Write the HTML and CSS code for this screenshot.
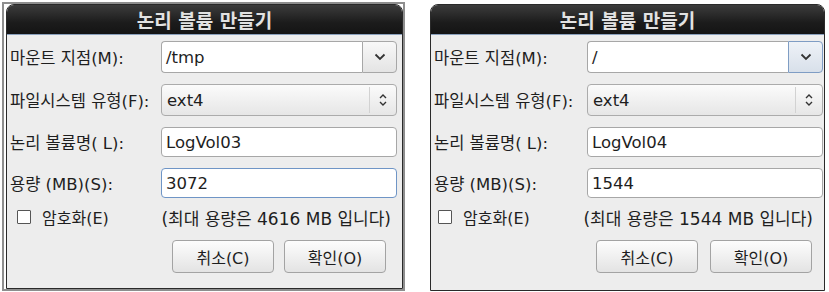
FILE: index.html
```html
<!DOCTYPE html>
<html lang="ko">
<head>
<meta charset="utf-8">
<link rel="stylesheet" href="styles.css">
</head>
<body>
<div class="page">
  <div class="shot shot-left">
    <div class="win">
      <div class="titlebar">논리 볼륨 만들기</div>
      <div class="content content-left">
        <div class="form">
          <label class="lbl">마운트 지점(M):</label>
          <div class="combo-entry">
            <div class="ce-text">/tmp</div>
            <div class="ce-btn"><svg width="12" height="8" viewBox="0 0 12 8"><path d="M1.5 1.5 L6 6 L10.5 1.5" fill="none" stroke="#333" stroke-width="1.8"/></svg></div>
          </div>
          <label class="lbl">파일시스템 유형(F):</label>
          <div class="combo-btn">
            <div class="cb-text">ext4</div>
            <div class="cb-sep"></div>
            <div class="cb-arrows"><svg width="10" height="14" viewBox="0 0 10 14"><path d="M2 5 L5 2 L8 5 M2 9 L5 12 L8 9" fill="none" stroke="#333" stroke-width="1.4"/></svg></div>
          </div>
          <label class="lbl">논리 볼륨명( L):</label>
          <div class="entry">LogVol03</div>
          <label class="lbl">용량 (MB)(S):</label>
          <div class="entry focused">3072</div>
        </div>
        <div class="checkrow">
          <div class="check"><span class="box"></span><span>암호화(E)</span></div>
          <div class="maxinfo">(최대 용량은 4616 MB 입니다)</div>
        </div>
        <div class="buttons">
          <button class="btn">취소(C)</button>
          <button class="btn">확인(O)</button>
        </div>
      </div>
    </div>
  </div>

  <div class="shot shot-right">
    <div class="win">
      <div class="titlebar">논리 볼륨 만들기</div>
      <div class="content content-right">
        <div class="form">
          <label class="lbl">마운트 지점(M):</label>
          <div class="combo-entry">
            <div class="ce-text">/</div>
            <div class="ce-btn ce-btn-focus"><svg width="12" height="8" viewBox="0 0 12 8"><path d="M1.5 1.5 L6 6 L10.5 1.5" fill="none" stroke="#333" stroke-width="1.8"/></svg></div>
          </div>
          <label class="lbl">파일시스템 유형(F):</label>
          <div class="combo-btn">
            <div class="cb-text">ext4</div>
            <div class="cb-sep"></div>
            <div class="cb-arrows"><svg width="10" height="14" viewBox="0 0 10 14"><path d="M2 5 L5 2 L8 5 M2 9 L5 12 L8 9" fill="none" stroke="#333" stroke-width="1.4"/></svg></div>
          </div>
          <label class="lbl">논리 볼륨명( L):</label>
          <div class="entry">LogVol04</div>
          <label class="lbl">용량 (MB)(S):</label>
          <div class="entry">1544</div>
        </div>
        <div class="checkrow">
          <div class="check"><span class="box"></span><span>암호화(E)</span></div>
          <div class="maxinfo">(최대 용량은 1544 MB 입니다)</div>
        </div>
        <div class="buttons">
          <button class="btn">취소(C)</button>
          <button class="btn">확인(O)</button>
        </div>
      </div>
    </div>
  </div>
</div>
</body>
</html>
```

FILE: styles.css
```css
html, body {
  margin: 0;
  padding: 0;
  background: #ffffff;
}
body {
  width: 829px;
  height: 292px;
  overflow: hidden;
  font-family: "DejaVu Sans", "Noto Sans CJK KR", sans-serif;
  font-size: 16px;
  color: #1e1e1e;
}
.page {
  display: flex;
  gap: 25px;
  padding: 2px 0 0 2px;
}
.shot-left {
  width: 397px;
  height: 285px;
  border: 2px solid #8e8e8e;
  padding: 0 0 0 2px;
  background: #ffffff;
  display: flex;
}
.shot-right {
  width: 395px;
  height: 287px;
  padding-top: 2px;
  display: flex;
}
.win {
  flex: 1;
  display: flex;
  flex-direction: column;
  border: 1px solid #2a2a2a;
  border-radius: 8px 8px 0 0;
  background: #ededed;
  overflow: hidden;
}
.titlebar {
  height: 29px;
  flex: none;
  background: linear-gradient(#3c3c3c, #1c1c1c 60%, #141414);
  color: #e2e2e2;
  font-weight: bold;
  font-size: 19px;
  display: flex;
  align-items: center;
  justify-content: center;
  border-bottom: 1px solid #8aa0bc;
}
.content {
  flex: 1;
  display: flex;
  flex-direction: column;
  padding-top: 6px;
}
.content-left { padding-left: 3px; padding-right: 5px; }
.content-right { padding-left: 3px; padding-right: 1px; }
.form {
  display: grid;
  row-gap: 11px;
  align-items: center;
}
.content-left .form { grid-template-columns: 151px 1fr; }
.content-right .form { grid-template-columns: 153px 1fr; }
.lbl {
  white-space: nowrap;
  font-size: 16.5px;
}
.combo-entry {
  height: 32px;
  display: flex;
  box-sizing: border-box;
}
.ce-text {
  flex: 1;
  background: #fff;
  border: 1px solid #a7a7a7;
  border-right: none;
  border-radius: 4px 0 0 4px;
  display: flex;
  align-items: center;
  padding-left: 4px;
  font-size: 16.5px;
}
.ce-btn {
  width: 33px;
  border: 1px solid #a7a7a7;
  border-radius: 0 4px 4px 0;
  background: linear-gradient(#f8f8f8, #e4e4e4);
  display: flex;
  align-items: center;
  justify-content: center;
}
.ce-btn-focus {
  border-color: #7f9dc4;
  background: linear-gradient(#eef2f7, #d8e0ea);
}
.combo-btn {
  height: 32px;
  box-sizing: border-box;
  border: 1px solid #ababab;
  border-radius: 4px;
  background: linear-gradient(#fbfbfb, #e6e6e6);
  display: flex;
  align-items: center;
}
.cb-text {
  flex: 1;
  padding-left: 5px;
  font-size: 16.5px;
}
.cb-sep {
  width: 1px;
  height: 26px;
  background: #d2d2d2;
}
.cb-arrows {
  width: 26px;
  display: flex;
  justify-content: center;
  align-items: center;
}
.entry {
  height: 30px;
  box-sizing: border-box;
  background: #fff;
  border: 1px solid #a7a7a7;
  border-radius: 4px;
  display: flex;
  align-items: center;
  padding-left: 4px;
  font-size: 16.5px;
}
.entry.focused {
  border-color: #6f95c6;
}
.checkrow {
  display: flex;
  align-items: center;
  justify-content: space-between;
  height: 24px;
  margin-top: 7px;
}
.content-left .checkrow { padding-left: 7px; padding-right: 6px; }
.content-right .checkrow { padding-left: 4px; padding-right: 10px; }
.check {
  display: flex;
  align-items: center;
  gap: 11px;
}
.box {
  width: 12px;
  height: 12px;
  border: 1px solid #555;
  background: #fff;
  border-radius: 1px;
}
.maxinfo {
  font-size: 17px;
}
.buttons {
  display: flex;
  justify-content: flex-end;
  gap: 10px;
  margin-top: 11px;
}
.content-left .buttons { padding-right: 11px; }
.content-right .buttons { padding-right: 11px; gap: 12px; }
.btn {
  width: 102px;
  height: 33px;
  font-family: "DejaVu Sans", "Noto Sans CJK KR", sans-serif;
  font-size: 16px;
  color: #1e1e1e;
  border: 1px solid #a3a3a3;
  border-radius: 4px;
  background: linear-gradient(#fdfdfd, #e3e3e3);
  padding: 0;
}
```
